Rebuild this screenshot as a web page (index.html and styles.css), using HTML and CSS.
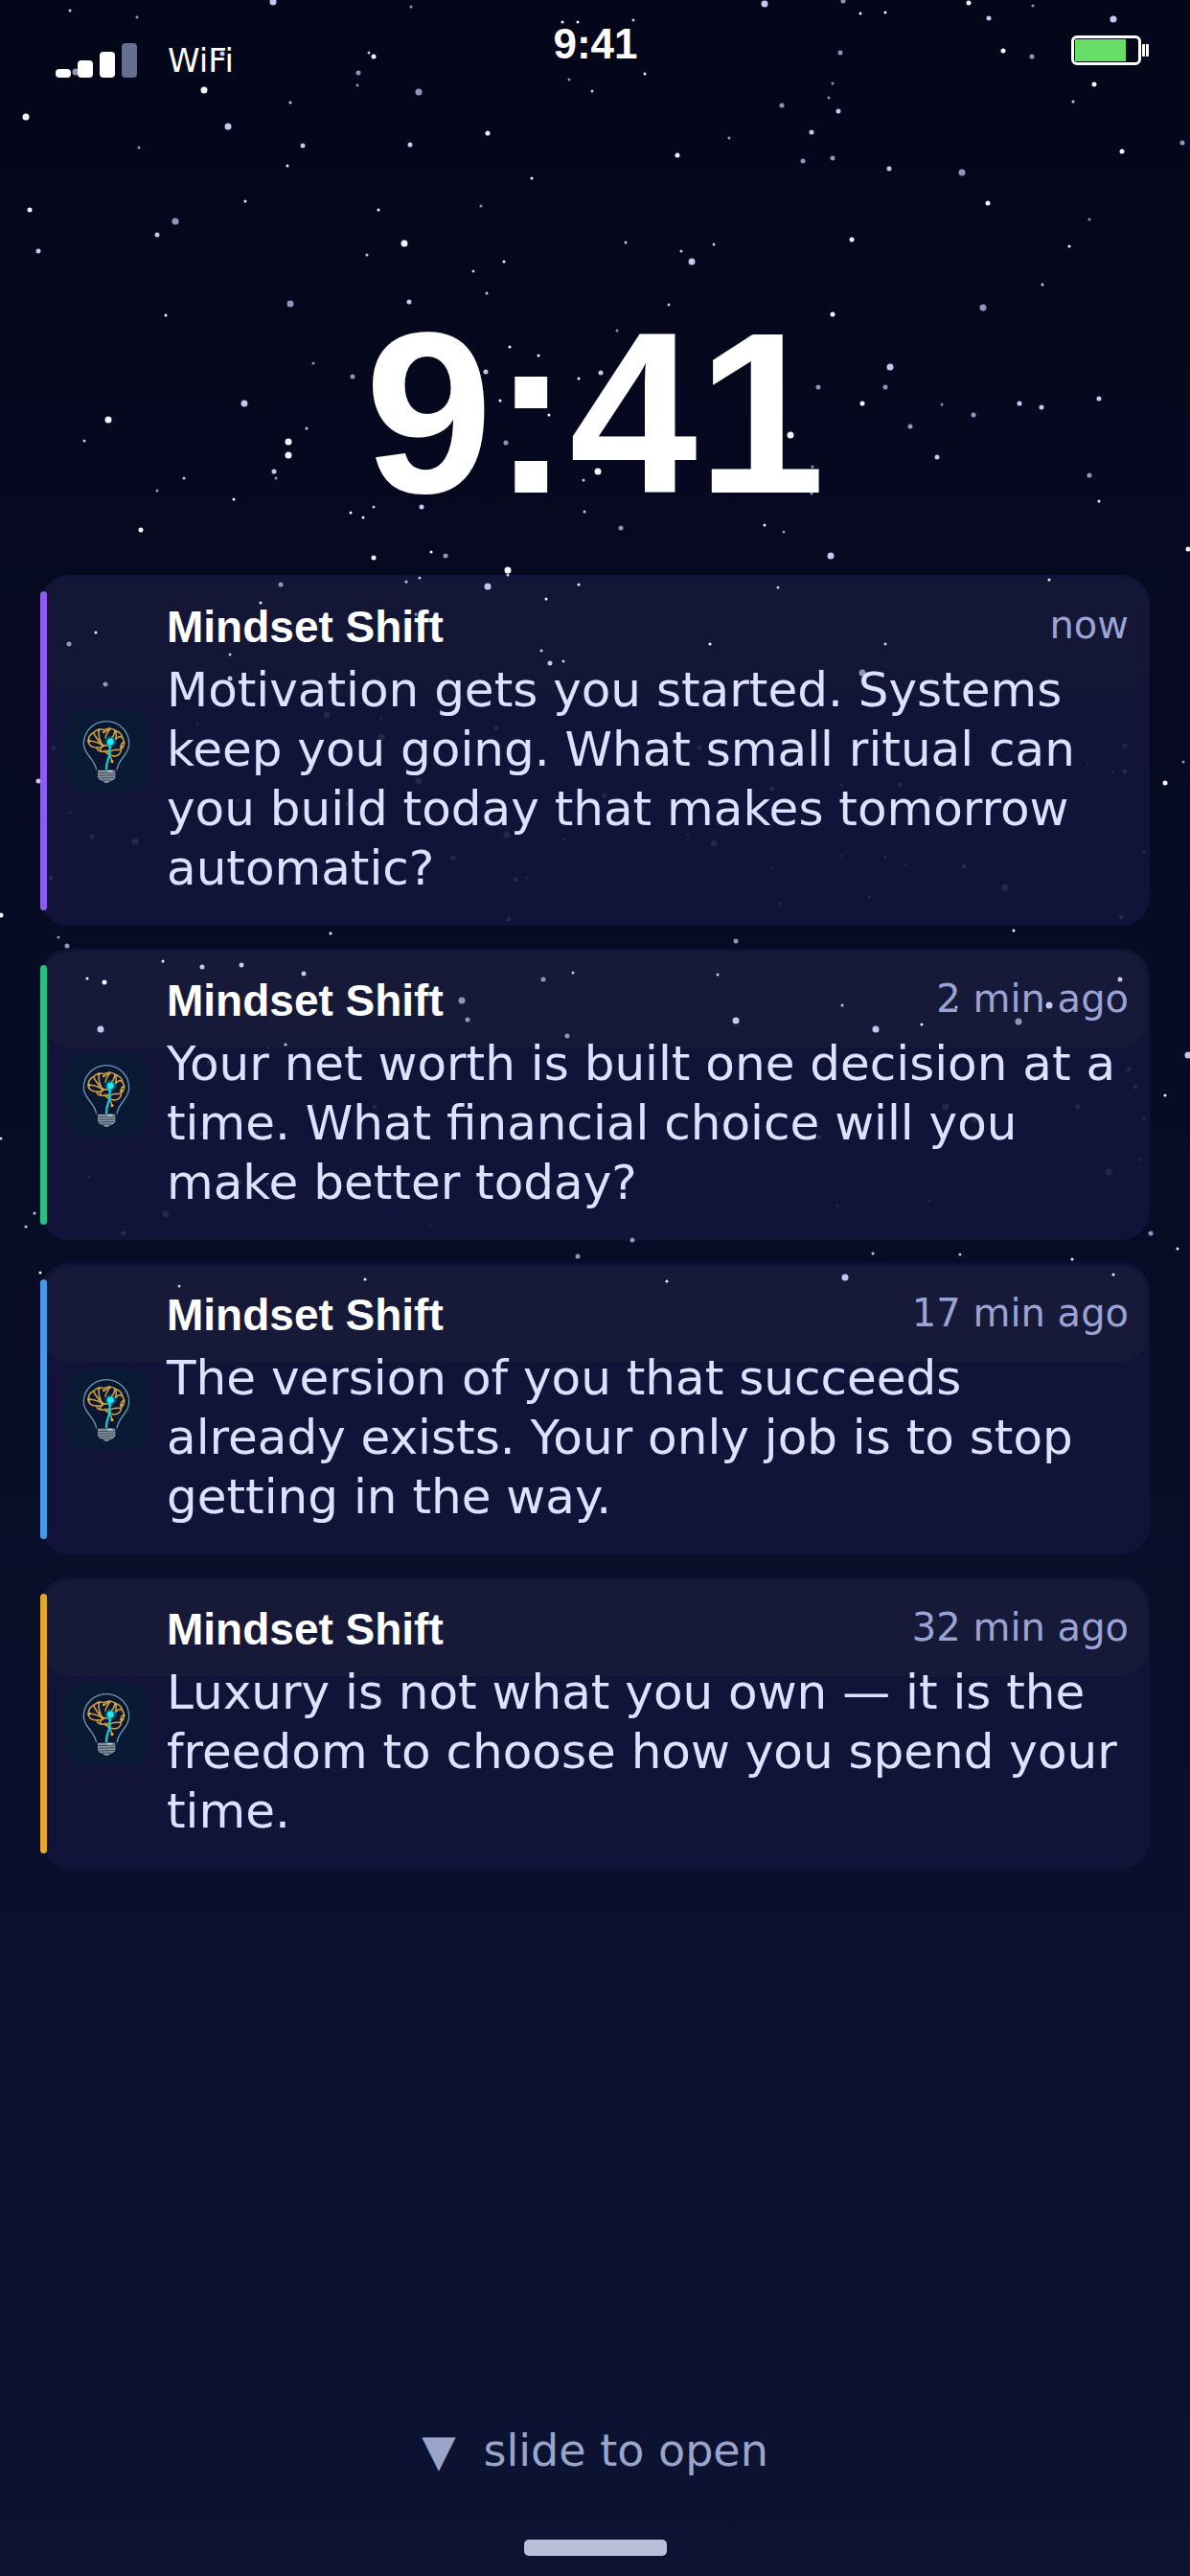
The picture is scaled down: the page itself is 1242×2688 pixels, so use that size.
FILE: index.html
```html
<!DOCTYPE html>
<html lang="en">
<head>
<meta charset="utf-8">
<meta name="viewport" content="width=device-width, initial-scale=1">
<title>Lock screen</title>
<link rel="stylesheet" href="styles.css">
</head>
<body>
<svg class="defs" width="0" height="0" aria-hidden="true">
  <symbol id="bulb" viewBox="24 29 258 258">
    <path d="M122 219C119 199 110 191 99 176C88 162 82 150 82 137A71 70 0 0 1 224 137C224 151 218 163 208 176C197 191 189 199 186 219" fill="#081630" stroke="#6c97b3" stroke-width="4"/>
    <g fill="none" stroke="#c99a3f" stroke-width="5" stroke-linecap="round" stroke-linejoin="round">
      <path d="M144 161C132 162 122 158 124 149C106 150 95 140 97 127C97 114 106 105 115 101C122 92 136 90 145 94C158 87 174 89 181 96C193 99 203 109 203 118C212 130 210 146 199 154C200 168 188 178 173 175C164 174 160 166 159 158C155 164 150 164 144 161Z"/>
      <path d="M99 129C115 127 125 133 140 141M114 105C119 117 129 128 140 141M130 94C127 109 132 126 140 141M124 149C134 148 139 153 145 144C152 140 160 142 168 148M145 101L158 94L163 92M163 92C158 104 151 108 150 119M181 97C175 106 178 114 169 120M181 97C187 106 184 115 181 124M203 118C197 113 190 115 184 122M207 135C199 133 199 142 200 147M168 160C176 153 188 158 198 155M150 158C148 166 160 168 165 175L171 193M136 150L134 158"/>
    </g>
    <g fill="#d9a542">
      <circle cx="99" cy="129" r="5"/><circle cx="130" cy="94" r="4"/><circle cx="145" cy="101" r="4"/><circle cx="163" cy="91" r="4"/><circle cx="181" cy="98" r="4"/><circle cx="140" cy="141" r="5"/><circle cx="207" cy="134" r="4"/><circle cx="200" cy="147" r="5"/><circle cx="171" cy="193" r="5"/>
    </g>
    <circle cx="166" cy="131" r="19" fill="#0a9fb5" opacity=".3"/>
    <circle cx="166" cy="131" r="13" fill="#12b9cf" opacity=".5"/>
    <path d="M153 219C152 190 162 184 164 168C165 155 161 148 166 131" fill="none" stroke="#0e8fa6" stroke-width="10" opacity=".5"/>
    <path d="M153 219C152 190 162 184 164 168C165 155 161 148 166 131" fill="none" stroke="#1cdbe6" stroke-width="5"/>
    <circle cx="166" cy="131" r="10" fill="#1feaf5"/>
    <path d="M126 220H181V243Q178 251 165 255Q153 265 142 255Q130 251 126 243Z" fill="#8b969e"/>
    <path d="M127 229L180 227M128 237L179 235M130 245L177 243M138 252L168 251" stroke="#33465a" stroke-width="3"/>
    <path d="M157 223H172" stroke="#c9d2d6" stroke-width="5"/>
  </symbol>
</svg>

<svg class="stars" viewBox="0 0 1242 1344" aria-hidden="true">
  <g class="small">
    <path class="dim" d="M143 18h0M429 7h0M373 89h0M145 154h0M502 215h0M594 83h0M1078 6h0M869 87h0M865 102h0M761 144h0M1137 229h0M327 379h0M288 499h0M164 512h0M644 345h0M983 422h0M848 487h0M847 515h0M818 555h0M434 641h0M61 978h0M1235 795h0"/>
    <path class="mid" d="M73 11h0M385 55h0M303 107h0M618 95h0M383 266h0M494 283h0M661 21h0M1120 106h0M653 253h0M711 262h0M745 255h0M1088 297h0M508 306h0M320 447h0M88 460h0M192 499h0M390 529h0M609 501h0M610 534h0M698 318h0M424 607h0M438 603h0M240 683h0M565 679h0M588 690h0M812 613h0M924 672h0M598 1015h0M298 1090h0M1 1188h0M36 1266h0M27 1280h0M187 1342h0M749 1017h0M879 1049h0M998 1051h0M911 1308h0M1002 1309h0M530 600h0"/>
    <path class="bright" d="M587 23h0M603 23h0M300 173h0M256 210h0M395 219h0M555 186h0M526 273h0M898 14h0M924 13h0M673 77h0M1116 257h0M173 329h0M532 362h0M562 371h0M604 395h0M522 418h0M573 433h0M244 521h0M366 535h0M379 540h0M450 576h0M1147 523h0M798 548h0M604 610h0M570 625h0M272 629h0M100 660h0M345 974h0M1095 605h0M741 672h0M1058 971h0M170 1003h0M91 1021h0M42 1328h0M381 1335h0M962 1069h0M1216 1143h0M1119 1314h0M1229 1303h0M1162 1330h0M696 1337h0"/>
    <path class="faint" d="M482 728h0M206 755h0M398 750h0M248 835h0M73 848h0M187 873h0M588 876h0M550 916h0M307 921h0M1135 798h0M1162 805h0M878 819h0M718 871h0M877 893h0M924 894h0M944 902h0M806 906h0M907 936h0M814 943h0M1194 889h0M280 1093h0M327 1153h0M482 1157h0M93 1228h0M280 1235h0M366 1221h0M449 1279h0M909 1097h0M1194 1167h0M1190 1210h0M970 1253h0M874 1258h0"/>
  </g>
  <g class="medium">
    <path class="dim" d="M374 76h0M880 1h0M877 55h0M1077 59h0M838 168h0M869 165h0M1234 149h0M816 110h0M368 393h0M528 462h0M465 580h0M854 404h0M924 404h0M1016 433h0M950 445h0M1137 496h0M648 551h0M293 610h0M72 672h0M110 714h0M70 987h0M768 982h0M567 1022h0M488 1064h0M592 1081h0M603 1311h0M660 1294h0M1201 1287h0"/>
    <path class="mid" d="M232 56h0M316 152h0M428 151h0M164 245h0M40 262h0M1032 19h0M875 116h0M847 138h0M928 176h0M427 315h0M507 388h0M286 492h0M440 529h0M627 389h0M1064 421h0M1087 425h0M1147 416h0M978 477h0M574 692h0M240 708h0M40 815h0M211 1009h0M252 1007h0M317 1016h0M1169 1022h0"/>
    <path class="bright" d="M390 59h0M509 139h0M31 219h0M1011 3h0M1047 53h0M1142 88h0M707 162h0M1171 158h0M1031 212h0M889 250h0M147 553h0M390 582h0M869 328h0M900 421h0M1240 573h0M1 955h0M1216 817h0M109 1025h0"/>
    <path class="faint" d="M518 760h0M56 781h0M363 839h0M96 873h0M473 895h0M53 916h0M538 918h0M531 959h0M276 902h0M730 780h0M1174 778h0M1174 805h0M806 823h0M939 819h0M982 833h0M631 830h0M670 843h0M1006 904h0M1170 957h0M218 1109h0M391 1155h0M211 1183h0M268 1182h0M250 1233h0M129 1287h0M1178 1116h0M1185 1134h0M1125 1155h0M750 1162h0M855 1187h0M1017 1169h0"/>
  </g>
  <g class="large">
    <path class="dim" d="M79 75h0M437 96h0M183 231h0M1004 180h0M303 317h0M1026 321h0M900 702h0M482 1044h0M1063 1066h0"/>
    <path class="mid" d="M285 2h0M238 132h0M798 4h0M1162 20h0M722 273h0M255 421h0M929 383h0M867 580h0M509 612h0M105 1074h0M768 1065h0M914 1074h0M1095 1049h0M882 1333h0M1240 1101h0"/>
    <path class="bright" d="M213 94h0M27 122h0M422 254h0M113 438h0M301 461h0M301 475h0M530 595h0M825 454h0M624 492h0"/>
    <path class="faint" d="M341 746h0M398 769h0M437 815h0M141 878h0M529 871h0M745 880h0M1049 926h0M173 1267h0M987 1155h0M1157 1223h0"/>
  </g>
</svg>

<div class="screen">
  <header class="status">
    <div class="network">
      <span class="signal" role="img" aria-label="Signal: 3 of 4 bars"><i></i><i></i><i></i><i class="off"></i></span>
      <span class="wifi">WiFi</span>
    </div>
    <span class="status-time">9:41</span>
    <span class="battery" role="img" aria-label="Battery"><span class="cell"><i></i></span><span class="nub"></span></span>
  </header>

  <h1 class="clock">9:41</h1>

  <main class="cards">
    <article class="card violet tall">
      <svg class="icon" aria-hidden="true"><use href="#bulb"/></svg>
      <div class="content">
        <div class="head"><h2>Mindset Shift</h2><time>now</time></div>
        <p>Motivation gets you started. Systems keep you going. What small ritual can you build today that makes tomorrow automatic?</p>
      </div>
    </article>
    <article class="card green">
      <svg class="icon" aria-hidden="true"><use href="#bulb"/></svg>
      <div class="content">
        <div class="head"><h2>Mindset Shift</h2><time>2 min ago</time></div>
        <p>Your net worth is built one decision at a time. What financial choice will you make better today?</p>
      </div>
    </article>
    <article class="card blue">
      <svg class="icon" aria-hidden="true"><use href="#bulb"/></svg>
      <div class="content">
        <div class="head"><h2>Mindset Shift</h2><time>17 min ago</time></div>
        <p>The version of you that succeeds already exists. Your only job is to stop getting in the way.</p>
      </div>
    </article>
    <article class="card amber">
      <svg class="icon" aria-hidden="true"><use href="#bulb"/></svg>
      <div class="content">
        <div class="head"><h2>Mindset Shift</h2><time>32 min ago</time></div>
        <p>Luxury is not what you own — it is the freedom to choose how you spend your time.</p>
      </div>
    </article>
  </main>

  <footer class="bottom">
    <button class="unlock" type="button"><span>▼</span><span>slide to open</span></button>
    <div class="home"></div>
  </footer>
</div>
</body>
</html>
```
FILE: styles.css
```css
* { box-sizing: border-box; }

body {
  margin: 0;
  position: relative;
  background: linear-gradient(#04061a, #0c1333);
  color: #fff;
  font-family: "DejaVu Sans", sans-serif;
}

h1, h2, p { margin: 0; }

.defs { position: absolute; }

/* Star field: lies over the card surfaces and under their text */
.stars {
  position: absolute;
  top: 0;
  left: 0;
  width: 100%;
  z-index: 1;
  fill: none;
  stroke-linecap: round;
  pointer-events: none;
}
.stars .small { stroke-width: 3; }
.stars .medium { stroke-width: 5; }
.stars .large { stroke-width: 7; }
.dim { stroke: #9593be; }
.mid { stroke: #c6c6f2; }
.bright { stroke: #f4f4ff; }
.faint { stroke: #26284b; }

.screen {
  min-height: 100vh;
  display: flex;
  flex-direction: column;
}

.status {
  position: relative;
  z-index: 2;
  display: grid;
  grid-template-columns: 1fr auto 1fr;
  align-items: start;
  height: 100px;
  padding: 20px 43px 0 58px;
}
.network {
  display: flex;
  align-items: flex-end;
  gap: 32px;
  padding-top: 25px;
}
.signal {
  display: flex;
  align-items: flex-end;
  gap: 7px;
}
.signal i {
  width: 16px;
  height: 9px;
  border-radius: 4px;
  background: #fff;
}
.signal i:nth-child(2) { height: 18px; }
.signal i:nth-child(3) { height: 27px; }
.signal i:nth-child(4) { height: 36px; }
.signal .off { background: #656f8e; }
.wifi { font-size: 34px; line-height: 36px; }
.status-time {
  margin-right: 14px;
  font: bold 44px/52px "Liberation Sans", Arial, sans-serif;
}
.battery {
  justify-self: end;
  display: flex;
  align-items: center;
  gap: 1px;
  padding-top: 17px;
}
.cell {
  width: 73px;
  height: 31px;
  padding: 1px;
  border: 3px solid #fff;
  border-radius: 6px;
}
.cell i {
  display: block;
  width: 53px;
  height: 23px;
  background: #67de66;
}
.nub {
  width: 7px;
  height: 13px;
  border: solid #fff;
  border-width: 0 3px;
  border-radius: 1px;
}

.clock {
  position: relative;
  z-index: 2;
  margin: 193px 0 31px;
  text-align: center;
  font: bold 240px/276px "Liberation Sans", Arial, sans-serif;
}

.cards {
  display: grid;
  gap: 24px;
  padding: 0 42px;
}

.card {
  --accent: #8f5cf0;
  position: relative;
  display: flex;
  align-items: center;
  gap: 20px;
  padding: 28px 22px 29px 26px;
  border-radius: 30px;
  background: #111338;
}
.card::before {
  content: "";
  position: absolute;
  inset: 3px 3px auto;
  height: 33%;
  border-radius: 27px;
  background: #161a38;
}
.card.tall::before { background: #131735; }
.card::after {
  content: "";
  position: absolute;
  inset: 17px auto 16px 0;
  width: 7px;
  border-radius: 4px;
  background: var(--accent);
  z-index: 2;
}
.green { --accent: #28c081; }
.blue { --accent: #4899ea; }
.amber { --accent: #e2a72b; }

.icon {
  position: relative;
  z-index: 2;
  flex: none;
  width: 86px;
  height: 86px;
  border-radius: 20px;
  background: #0a1a35;
}
.content {
  position: relative;
  z-index: 2;
  flex: 1;
  display: grid;
  gap: 9px;
}
.head {
  display: flex;
  justify-content: space-between;
  align-items: flex-start;
}
.head h2 { font: bold 46px/52px "Liberation Sans", Arial, sans-serif; }
.head time { font-size: 40px; line-height: 48px; color: #9aa3d3; }
.content p { font-size: 50px; line-height: 62px; color: #dde3ff; }

.bottom {
  margin-top: auto;
  display: flex;
  flex-direction: column;
  align-items: center;
  gap: 63px;
  padding-bottom: 21px;
}
.unlock {
  display: flex;
  gap: 29px;
  padding: 0;
  border: 0;
  background: none;
  font: 46px/60px "DejaVu Sans", sans-serif;
  color: #9ba5ca;
}
.home {
  width: 149px;
  height: 17px;
  border-radius: 5px;
  background: #b9bed9;
}
```
